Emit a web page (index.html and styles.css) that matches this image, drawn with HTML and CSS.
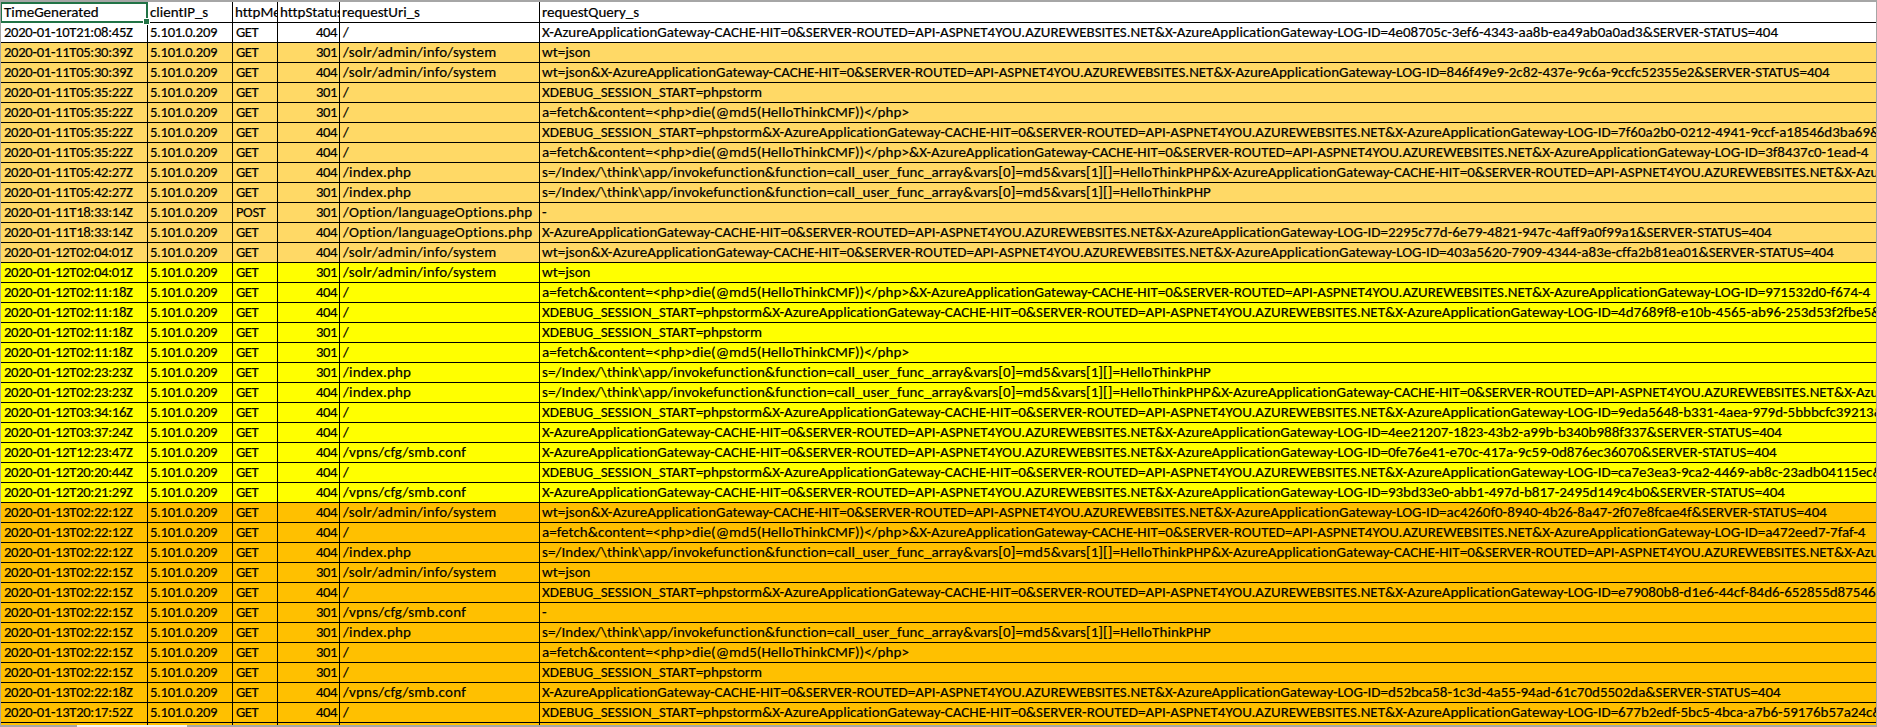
FILE: index.html
```html
<!DOCTYPE html>
<html lang="en">
<head>
<meta charset="utf-8">
<title>Log sheet</title>
<link rel="stylesheet" href="styles.css">
</head>
<body>
<main class="sheet">
<div class="viewport">
<table class="grid">
<colgroup><col class="c1"><col class="c2"><col class="c3"><col class="c4"><col class="c5"><col class="c6"></colgroup>
<thead>
<tr><th class="selected">TimeGenerated<span class="handle"></span></th><th>clientIP_s</th><th>httpMethod_s</th><th>httpStatus_d</th><th>requestUri_s</th><th>requestQuery_s</th></tr>
</thead>
<tbody>
<tr class="tone-w"><td class="d">2020-01-10T21:08:45Z</td><td class="d">5.101.0.209</td><td class="m">GET</td><td class="n">404</td><td class="u">/</td><td>X-AzureApplicationGateway-CACHE-HIT=0&amp;SERVER-ROUTED=API-ASPNET4YOU.AZUREWEBSITES.NET&amp;X-AzureApplicationGateway-LOG-ID=4e08705c-3ef6-4343-aa8b-ea49ab0a0ad3&amp;SERVER-STATUS=404</td></tr>
<tr class="tone-g"><td class="d">2020-01-11T05:30:39Z</td><td class="d">5.101.0.209</td><td class="m">GET</td><td class="n">301</td><td class="u">/solr/admin/info/system</td><td>wt=json</td></tr>
<tr class="tone-g"><td class="d">2020-01-11T05:30:39Z</td><td class="d">5.101.0.209</td><td class="m">GET</td><td class="n">404</td><td class="u">/solr/admin/info/system</td><td>wt=json&amp;X-AzureApplicationGateway-CACHE-HIT=0&amp;SERVER-ROUTED=API-ASPNET4YOU.AZUREWEBSITES.NET&amp;X-AzureApplicationGateway-LOG-ID=846f49e9-2c82-437e-9c6a-9ccfc52355e2&amp;SERVER-STATUS=404</td></tr>
<tr class="tone-g"><td class="d">2020-01-11T05:35:22Z</td><td class="d">5.101.0.209</td><td class="m">GET</td><td class="n">301</td><td class="u">/</td><td><span class="xd">XDEBUG_SESSION_START=phpstorm</span></td></tr>
<tr class="tone-g"><td class="d">2020-01-11T05:35:22Z</td><td class="d">5.101.0.209</td><td class="m">GET</td><td class="n">301</td><td class="u">/</td><td><span class="ft">a=fetch&amp;content=&lt;php&gt;die(@md5(HelloThinkCMF))&lt;/php&gt;</span></td></tr>
<tr class="tone-g"><td class="d">2020-01-11T05:35:22Z</td><td class="d">5.101.0.209</td><td class="m">GET</td><td class="n">404</td><td class="u">/</td><td><span class="xd">XDEBUG_SESSION_START=phpstorm</span>&amp;X-AzureApplicationGateway-CACHE-HIT=0&amp;SERVER-ROUTED=API-ASPNET4YOU.AZUREWEBSITES.NET&amp;X-AzureApplicationGateway-LOG-ID=7f60a2b0-0212-4941-9ccf-a18546d3ba69&amp;SERVER-STATUS=404</td></tr>
<tr class="tone-g"><td class="d">2020-01-11T05:35:22Z</td><td class="d">5.101.0.209</td><td class="m">GET</td><td class="n">404</td><td class="u">/</td><td><span class="ft">a=fetch&amp;content=&lt;php&gt;die(@md5(HelloThinkCMF))&lt;/php&gt;</span>&amp;X-AzureApplicationGateway-CACHE-HIT=0&amp;SERVER-ROUTED=API-ASPNET4YOU.AZUREWEBSITES.NET&amp;X-AzureApplicationGateway-LOG-ID=3f8437c0-1ead-4</td></tr>
<tr class="tone-g"><td class="d">2020-01-11T05:42:27Z</td><td class="d">5.101.0.209</td><td class="m">GET</td><td class="n">404</td><td class="u">/index.php</td><td><span class="iv">s=/Index/\think\app/invokefunction&amp;function=call_user_func_array&amp;vars[0]=md5&amp;vars[1][]=HelloThinkPHP</span>&amp;X-AzureApplicationGateway-CACHE-HIT=0&amp;SERVER-ROUTED=API-ASPNET4YOU.AZUREWEBSITES.NET&amp;X-AzureApplicationGateway-LOG-ID=</td></tr>
<tr class="tone-g"><td class="d">2020-01-11T05:42:27Z</td><td class="d">5.101.0.209</td><td class="m">GET</td><td class="n">301</td><td class="u">/index.php</td><td><span class="iv">s=/Index/\think\app/invokefunction&amp;function=call_user_func_array&amp;vars[0]=md5&amp;vars[1][]=HelloThinkPHP</span></td></tr>
<tr class="tone-g"><td class="d">2020-01-11T18:33:14Z</td><td class="d">5.101.0.209</td><td class="m">POST</td><td class="n">301</td><td class="u">/Option/languageOptions.php</td><td>-</td></tr>
<tr class="tone-g"><td class="d">2020-01-11T18:33:14Z</td><td class="d">5.101.0.209</td><td class="m">GET</td><td class="n">404</td><td class="u">/Option/languageOptions.php</td><td>X-AzureApplicationGateway-CACHE-HIT=0&amp;SERVER-ROUTED=API-ASPNET4YOU.AZUREWEBSITES.NET&amp;X-AzureApplicationGateway-LOG-ID=2295c77d-6e79-4821-947c-4aff9a0f99a1&amp;SERVER-STATUS=404</td></tr>
<tr class="tone-g"><td class="d">2020-01-12T02:04:01Z</td><td class="d">5.101.0.209</td><td class="m">GET</td><td class="n">404</td><td class="u">/solr/admin/info/system</td><td>wt=json&amp;X-AzureApplicationGateway-CACHE-HIT=0&amp;SERVER-ROUTED=API-ASPNET4YOU.AZUREWEBSITES.NET&amp;X-AzureApplicationGateway-LOG-ID=403a5620-7909-4344-a83e-cffa2b81ea01&amp;SERVER-STATUS=404</td></tr>
<tr class="tone-y"><td class="d">2020-01-12T02:04:01Z</td><td class="d">5.101.0.209</td><td class="m">GET</td><td class="n">301</td><td class="u">/solr/admin/info/system</td><td>wt=json</td></tr>
<tr class="tone-y"><td class="d">2020-01-12T02:11:18Z</td><td class="d">5.101.0.209</td><td class="m">GET</td><td class="n">404</td><td class="u">/</td><td><span class="ft">a=fetch&amp;content=&lt;php&gt;die(@md5(HelloThinkCMF))&lt;/php&gt;</span>&amp;X-AzureApplicationGateway-CACHE-HIT=0&amp;SERVER-ROUTED=API-ASPNET4YOU.AZUREWEBSITES.NET&amp;X-AzureApplicationGateway-LOG-ID=971532d0-f674-4</td></tr>
<tr class="tone-y"><td class="d">2020-01-12T02:11:18Z</td><td class="d">5.101.0.209</td><td class="m">GET</td><td class="n">404</td><td class="u">/</td><td><span class="xd">XDEBUG_SESSION_START=phpstorm</span>&amp;X-AzureApplicationGateway-CACHE-HIT=0&amp;SERVER-ROUTED=API-ASPNET4YOU.AZUREWEBSITES.NET&amp;X-AzureApplicationGateway-LOG-ID=4d7689f8-e10b-4565-ab96-253d53f2fbe5&amp;SERVER-STATUS=404</td></tr>
<tr class="tone-y"><td class="d">2020-01-12T02:11:18Z</td><td class="d">5.101.0.209</td><td class="m">GET</td><td class="n">301</td><td class="u">/</td><td><span class="xd">XDEBUG_SESSION_START=phpstorm</span></td></tr>
<tr class="tone-y"><td class="d">2020-01-12T02:11:18Z</td><td class="d">5.101.0.209</td><td class="m">GET</td><td class="n">301</td><td class="u">/</td><td><span class="ft">a=fetch&amp;content=&lt;php&gt;die(@md5(HelloThinkCMF))&lt;/php&gt;</span></td></tr>
<tr class="tone-y"><td class="d">2020-01-12T02:23:23Z</td><td class="d">5.101.0.209</td><td class="m">GET</td><td class="n">301</td><td class="u">/index.php</td><td><span class="iv">s=/Index/\think\app/invokefunction&amp;function=call_user_func_array&amp;vars[0]=md5&amp;vars[1][]=HelloThinkPHP</span></td></tr>
<tr class="tone-y"><td class="d">2020-01-12T02:23:23Z</td><td class="d">5.101.0.209</td><td class="m">GET</td><td class="n">404</td><td class="u">/index.php</td><td><span class="iv">s=/Index/\think\app/invokefunction&amp;function=call_user_func_array&amp;vars[0]=md5&amp;vars[1][]=HelloThinkPHP</span>&amp;X-AzureApplicationGateway-CACHE-HIT=0&amp;SERVER-ROUTED=API-ASPNET4YOU.AZUREWEBSITES.NET&amp;X-AzureApplicationGateway-LOG-ID=</td></tr>
<tr class="tone-y"><td class="d">2020-01-12T03:34:16Z</td><td class="d">5.101.0.209</td><td class="m">GET</td><td class="n">404</td><td class="u">/</td><td><span class="xd">XDEBUG_SESSION_START=phpstorm</span>&amp;X-AzureApplicationGateway-CACHE-HIT=0&amp;SERVER-ROUTED=API-ASPNET4YOU.AZUREWEBSITES.NET&amp;X-AzureApplicationGateway-LOG-ID=9eda5648-b331-4aea-979d-5bbbcfc39213&amp;SERVER-STATUS=404</td></tr>
<tr class="tone-y"><td class="d">2020-01-12T03:37:24Z</td><td class="d">5.101.0.209</td><td class="m">GET</td><td class="n">404</td><td class="u">/</td><td>X-AzureApplicationGateway-CACHE-HIT=0&amp;SERVER-ROUTED=API-ASPNET4YOU.AZUREWEBSITES.NET&amp;X-AzureApplicationGateway-LOG-ID=4ee21207-1823-43b2-a99b-b340b988f337&amp;SERVER-STATUS=404</td></tr>
<tr class="tone-y"><td class="d">2020-01-12T12:23:47Z</td><td class="d">5.101.0.209</td><td class="m">GET</td><td class="n">404</td><td class="u">/vpns/cfg/smb.conf</td><td>X-AzureApplicationGateway-CACHE-HIT=0&amp;SERVER-ROUTED=API-ASPNET4YOU.AZUREWEBSITES.NET&amp;X-AzureApplicationGateway-LOG-ID=0fe76e41-e70c-417a-9c59-0d876ec36070&amp;SERVER-STATUS=404</td></tr>
<tr class="tone-y"><td class="d">2020-01-12T20:20:44Z</td><td class="d">5.101.0.209</td><td class="m">GET</td><td class="n">404</td><td class="u">/</td><td><span class="xd">XDEBUG_SESSION_START=phpstorm</span>&amp;X-AzureApplicationGateway-CACHE-HIT=0&amp;SERVER-ROUTED=API-ASPNET4YOU.AZUREWEBSITES.NET&amp;X-AzureApplicationGateway-LOG-ID=ca7e3ea3-9ca2-4469-ab8c-23adb04115ec&amp;SERVER-STATUS=404</td></tr>
<tr class="tone-y"><td class="d">2020-01-12T20:21:29Z</td><td class="d">5.101.0.209</td><td class="m">GET</td><td class="n">404</td><td class="u">/vpns/cfg/smb.conf</td><td>X-AzureApplicationGateway-CACHE-HIT=0&amp;SERVER-ROUTED=API-ASPNET4YOU.AZUREWEBSITES.NET&amp;X-AzureApplicationGateway-LOG-ID=93bd33e0-abb1-497d-b817-2495d149c4b0&amp;SERVER-STATUS=404</td></tr>
<tr class="tone-o"><td class="d">2020-01-13T02:22:12Z</td><td class="d">5.101.0.209</td><td class="m">GET</td><td class="n">404</td><td class="u">/solr/admin/info/system</td><td>wt=json&amp;X-AzureApplicationGateway-CACHE-HIT=0&amp;SERVER-ROUTED=API-ASPNET4YOU.AZUREWEBSITES.NET&amp;X-AzureApplicationGateway-LOG-ID=ac4260f0-8940-4b26-8a47-2f07e8fcae4f&amp;SERVER-STATUS=404</td></tr>
<tr class="tone-o"><td class="d">2020-01-13T02:22:12Z</td><td class="d">5.101.0.209</td><td class="m">GET</td><td class="n">404</td><td class="u">/</td><td><span class="ft">a=fetch&amp;content=&lt;php&gt;die(@md5(HelloThinkCMF))&lt;/php&gt;</span>&amp;X-AzureApplicationGateway-CACHE-HIT=0&amp;SERVER-ROUTED=API-ASPNET4YOU.AZUREWEBSITES.NET&amp;X-AzureApplicationGateway-LOG-ID=a472eed7-7faf-4</td></tr>
<tr class="tone-o"><td class="d">2020-01-13T02:22:12Z</td><td class="d">5.101.0.209</td><td class="m">GET</td><td class="n">404</td><td class="u">/index.php</td><td><span class="iv">s=/Index/\think\app/invokefunction&amp;function=call_user_func_array&amp;vars[0]=md5&amp;vars[1][]=HelloThinkPHP</span>&amp;X-AzureApplicationGateway-CACHE-HIT=0&amp;SERVER-ROUTED=API-ASPNET4YOU.AZUREWEBSITES.NET&amp;X-AzureApplicationGateway-LOG-ID=</td></tr>
<tr class="tone-o"><td class="d">2020-01-13T02:22:15Z</td><td class="d">5.101.0.209</td><td class="m">GET</td><td class="n">301</td><td class="u">/solr/admin/info/system</td><td>wt=json</td></tr>
<tr class="tone-o"><td class="d">2020-01-13T02:22:15Z</td><td class="d">5.101.0.209</td><td class="m">GET</td><td class="n">404</td><td class="u">/</td><td><span class="xd">XDEBUG_SESSION_START=phpstorm</span>&amp;X-AzureApplicationGateway-CACHE-HIT=0&amp;SERVER-ROUTED=API-ASPNET4YOU.AZUREWEBSITES.NET&amp;X-AzureApplicationGateway-LOG-ID=e79080b8-d1e6-44cf-84d6-652855d87546&amp;SERVER-STATUS=404</td></tr>
<tr class="tone-o"><td class="d">2020-01-13T02:22:15Z</td><td class="d">5.101.0.209</td><td class="m">GET</td><td class="n">301</td><td class="u">/vpns/cfg/smb.conf</td><td>-</td></tr>
<tr class="tone-o"><td class="d">2020-01-13T02:22:15Z</td><td class="d">5.101.0.209</td><td class="m">GET</td><td class="n">301</td><td class="u">/index.php</td><td><span class="iv">s=/Index/\think\app/invokefunction&amp;function=call_user_func_array&amp;vars[0]=md5&amp;vars[1][]=HelloThinkPHP</span></td></tr>
<tr class="tone-o"><td class="d">2020-01-13T02:22:15Z</td><td class="d">5.101.0.209</td><td class="m">GET</td><td class="n">301</td><td class="u">/</td><td><span class="ft">a=fetch&amp;content=&lt;php&gt;die(@md5(HelloThinkCMF))&lt;/php&gt;</span></td></tr>
<tr class="tone-o"><td class="d">2020-01-13T02:22:15Z</td><td class="d">5.101.0.209</td><td class="m">GET</td><td class="n">301</td><td class="u">/</td><td><span class="xd">XDEBUG_SESSION_START=phpstorm</span></td></tr>
<tr class="tone-o"><td class="d">2020-01-13T02:22:18Z</td><td class="d">5.101.0.209</td><td class="m">GET</td><td class="n">404</td><td class="u">/vpns/cfg/smb.conf</td><td>X-AzureApplicationGateway-CACHE-HIT=0&amp;SERVER-ROUTED=API-ASPNET4YOU.AZUREWEBSITES.NET&amp;X-AzureApplicationGateway-LOG-ID=d52bca58-1c3d-4a55-94ad-61c70d5502da&amp;SERVER-STATUS=404</td></tr>
<tr class="tone-o"><td class="d">2020-01-13T20:17:52Z</td><td class="d">5.101.0.209</td><td class="m">GET</td><td class="n">404</td><td class="u">/</td><td><span class="xd">XDEBUG_SESSION_START=phpstorm</span>&amp;X-AzureApplicationGateway-CACHE-HIT=0&amp;SERVER-ROUTED=API-ASPNET4YOU.AZUREWEBSITES.NET&amp;X-AzureApplicationGateway-LOG-ID=677b2edf-5bc5-4bca-a7b6-59176b57a24c&amp;SERVER-STATUS=404</td></tr>
<tr class="tone-o"><td></td><td></td><td></td><td></td><td></td><td></td></tr>
</tbody>
</table>
</div>
<div class="scrollbar"><span class="thumb"></span></div>
</main>
</body>
</html>
```
FILE: styles.css
```css
html, body {
  margin: 0;
  padding: 0;
  height: 100%;
  overflow: hidden;
  background: #a6a6a6;
}
.sheet {
  box-sizing: border-box;
  display: flex;
  flex-direction: column;
  width: 1877px;
  height: 727px;
  padding-top: 2px;
}
.viewport {
  flex: 1;
  min-height: 0;
  margin: 0 1px;
  overflow: hidden;
}
.scrollbar {
  display: flex;
  flex: none;
  height: 2px;
  padding-left: 77px;
}
.thumb {
  width: 110px;
  background: #f4f4f4;
}
.grid {
  table-layout: fixed;
  width: 1875px;
  border-collapse: separate;
  border-spacing: 0;
  font-family: Carlito, Lato, "Liberation Sans", sans-serif;
  font-size: 15px;
  font-variant-ligatures: none;
  letter-spacing: -0.01px;
  -webkit-text-stroke: 0.2px #000;
  color: #000;
  background: #fff;
}
.c1 { width: 147px; }
.c2 { width: 85px; }
.c3 { width: 45px; }
.c4 { width: 62px; }
.c5 { width: 200px; }
.c6 { width: 1336px; }
th, td {
  box-sizing: border-box;
  height: 20px;
  padding: 0 2px 0 2px;
  border-right: 1px solid #000;
  border-bottom: 1px solid #000;
  font-weight: 400;
  text-align: left;
  white-space: nowrap;
  overflow: hidden;
  line-height: 19px;
}
th { height: 21px; padding-top: 1px; }
th:last-child, td:last-child { border-right: 0; }
th:first-child, td:first-child { padding-left: 3px; }
td.d { font-size: 14.67px; letter-spacing: -0.31px; }
td.m { padding-left: 3px; font-size: 14.67px; letter-spacing: -0.45px; }
td.n { text-align: right; font-size: 14.67px; letter-spacing: -0.45px; }
td.u { padding-left: 3px; letter-spacing: 0.2px; }
.xd { letter-spacing: -0.05px; }
.ft { letter-spacing: 0.07px; }
.iv { letter-spacing: 0.09px; }
.selected {
  position: relative;
  overflow: visible;
}
.selected::before {
  content: "";
  position: absolute;
  top: 0;
  left: -1px;
  right: -1px;
  bottom: -1px;
  border: 2px solid #217346;
  pointer-events: none;
}
.handle {
  position: absolute;
  right: -2px;
  bottom: -2px;
  width: 5px;
  height: 5px;
  background: #217346;
  box-shadow: 0 0 0 1px #fff;
}
.tone-w { background: #fff; }
.tone-g { background: #ffd966; }
.tone-y { background: #ffff00; }
.tone-o { background: #ffc000; }
```
